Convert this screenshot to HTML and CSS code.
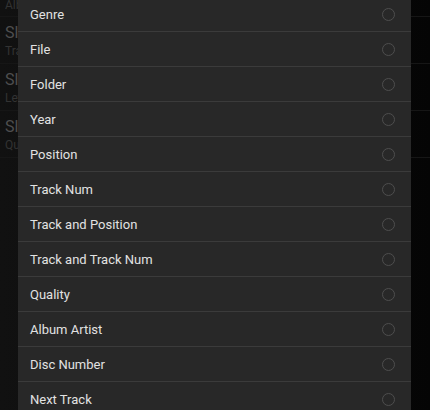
FILE: index.html
```html
<!DOCTYPE html>
<html lang="en">
<head>
    <meta charset="UTF-8">
    <title>Sort By</title>
    <link rel="stylesheet" href="styles.css">
</head>
<body>
    <div class="screen">
        <!-- underlying settings list, dimmed behind the dialog -->
        <ul class="bg-list">
            <li class="bg-row bg-first"><span class="bg-sub">Album Artist</span></li>
            <li class="bg-row"><span class="bg-title">Sleep Timer</span><span class="bg-sub">Track</span></li>
            <li class="bg-row"><span class="bg-title">Sleep Mode</span><span class="bg-sub">Let track finish</span></li>
            <li class="bg-row"><span class="bg-title">Sleep Action</span><span class="bg-sub">Quit</span></li>
        </ul>

        <div class="dialog">
            <ul class="options" id="options"></ul>
        </div>
    </div>
    <script>
        const options = [
            'Genre', 'File', 'Folder', 'Year', 'Position', 'Track Num',
            'Track and Position', 'Track and Track Num', 'Quality',
            'Album Artist', 'Disc Number', 'Next Track'
        ];
        const list = document.getElementById('options');
        options.forEach(name => {
            const li = document.createElement('li');
            li.className = 'option';
            li.innerHTML = `<span class="option-label">${name}</span><span class="radio"></span>`;
            list.appendChild(li);
        });
    </script>
</body>
</html>
```

FILE: styles.css
```css
html, body {
    margin: 0;
    padding: 0;
    background: #060606;
}
body {
    font-family: Roboto, 'Liberation Sans', sans-serif;
}
.screen {
    position: relative;
    width: 430px;
    height: 410px;
    overflow: hidden;
    background: linear-gradient(to right, #111 0%, #0b0b0b 50%, #050505 100%);
}
.bg-list {
    list-style: none;
    margin: 0;
    padding: 0;
}
.bg-row {
    height: 46px;
    border-bottom: 1px solid #161616;
    display: flex;
    flex-direction: column;
    justify-content: center;
    padding-left: 5px;
}
.bg-row.bg-first {
    height: 16px;
    justify-content: flex-end;
}
.bg-title {
    font-size: 16px;
    color: #4e4e4e;
    line-height: 20px;
}
.bg-sub {
    font-size: 12px;
    color: #333;
    line-height: 14px;
    margin-top: 1px;
}
.bg-first .bg-sub {
    line-height: 12px;
    margin-bottom: 5px;
}
.dialog {
    position: absolute;
    left: 18px;
    top: -3px;
    width: 393px;
    background: #282828;
}
.options {
    list-style: none;
    margin: 0;
    padding: 0;
}
.option {
    height: 35px;
    box-sizing: border-box;
    border-bottom: 1px solid #3b3b3b;
    display: flex;
    align-items: center;
    justify-content: space-between;
    padding: 1px 16px 0 12px;
}
.option-label {
    font-size: 13px;
    color: #e2e2e2;
}
.radio {
    width: 13px;
    height: 13px;
    box-sizing: border-box;
    border: 1.5px solid #4e4e4e;
    border-radius: 50%;
}
```
